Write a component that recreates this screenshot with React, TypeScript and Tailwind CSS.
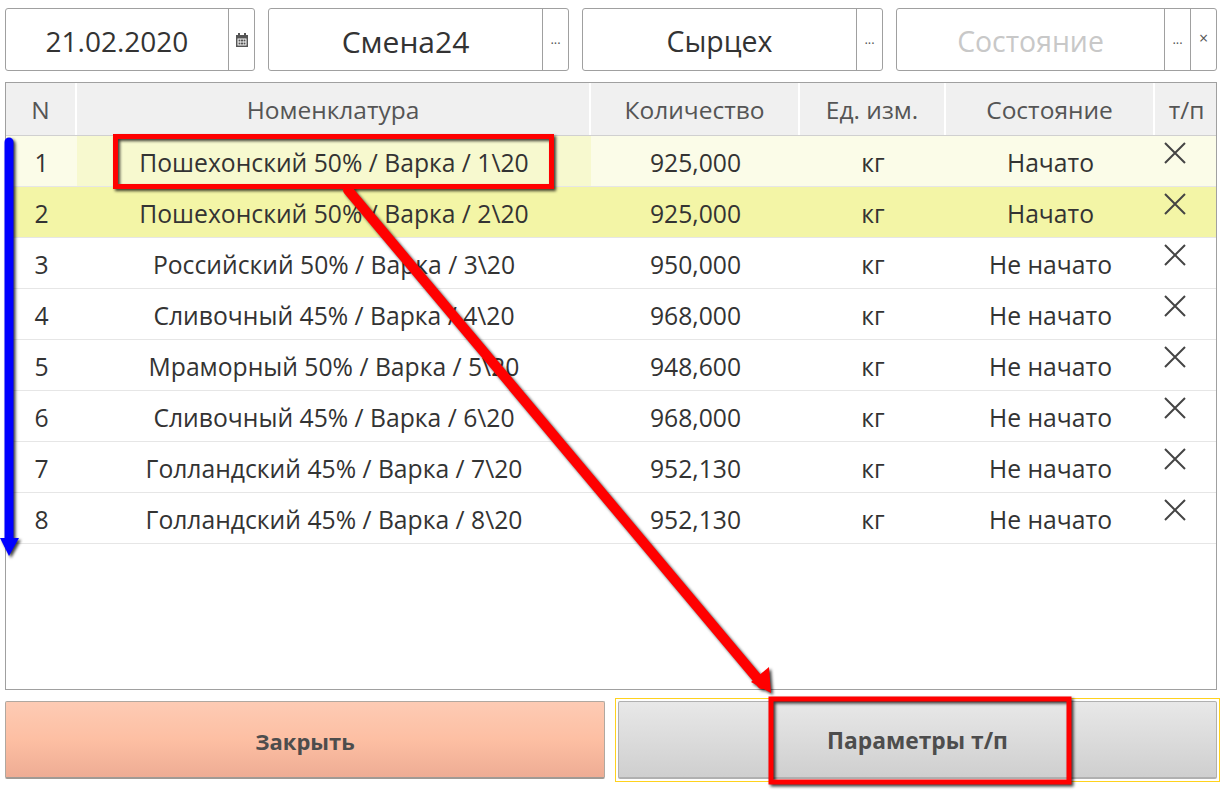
import React from 'react';

const rows = [
  ['1', 'Пошехонский 50% / Варка / 1\\20', '925,000', 'кг', 'Начато'],
  ['2', 'Пошехонский 50% / Варка / 2\\20', '925,000', 'кг', 'Начато'],
  ['3', 'Российский 50% / Варка / 3\\20', '950,000', 'кг', 'Не начато'],
  ['4', 'Сливочный 45% / Варка / 4\\20', '968,000', 'кг', 'Не начато'],
  ['5', 'Мраморный 50% / Варка / 5\\20', '948,600', 'кг', 'Не начато'],
  ['6', 'Сливочный 45% / Варка / 6\\20', '968,000', 'кг', 'Не начато'],
  ['7', 'Голландский 45% / Варка / 7\\20', '952,130', 'кг', 'Не начато'],
  ['8', 'Голландский 45% / Варка / 8\\20', '952,130', 'кг', 'Не начато'],
];

const Addon = ({ children, className = 'w-[26px]' }: { children: React.ReactNode; className?: string }) => (
  <div className={`${className} shrink-0 border-l border-[#a0a0a0] flex items-center justify-center text-[#555] text-[13px]`}>
    {children}
  </div>
);

const Field = ({ value, textClass, className, children }: { value: string; textClass: string; className: string; children: React.ReactNode }) => (
  <div className={`${className} h-[63px] shrink-0 flex border border-[#a0a0a0] rounded-[3px] bg-white`}>
    <div className={`flex-1 flex items-center justify-center pt-[3px] ${textClass}`}>{value}</div>
    {children}
  </div>
);

const Cross = () => (
  <svg width="22" height="22" viewBox="0 0 22 22" className="text-[#444]">
    <path d="M1 1 L21 21 M21 1 L1 21" stroke="currentColor" strokeWidth="2" fill="none" />
  </svg>
);

const Calendar = () => (
  <svg width="12" height="14" viewBox="0 0 12 14" fill="#555">
    <path d="M0 2h2V0h2v2h4V0h2v2h2v12H0z M1.5 5.5v7h9v-7z" fillRule="evenodd" />
    <path d="M2.5 6.5h2v2h-2z M5 6.5h2v2H5z M7.5 6.5h2v2h-2z M2.5 9.5h2v2h-2z M5 9.5h2v2H5z M7.5 9.5h2v2h-2z" />
  </svg>
);

const headCell = 'flex items-center justify-center pt-[2px] border-r-2 border-white text-[#555] text-[24.5px]';
const cols = 'grid grid-cols-[71px_514px_209px_146px_209px_63px]';

export default function App() {
  return (
    <div className="relative w-[1228px] h-[790px] bg-white overflow-hidden pt-2 pl-[5px] font-['Open_Sans','Noto_Sans',sans-serif]">
      {/* top filter row */}
      <div className="flex gap-[13px]">
        <Field value="21.02.2020" textClass="text-[28px] text-[#333]" className="w-[250px]">
          <Addon><Calendar /></Addon>
        </Field>
        <Field value="Смена24" textClass="text-[30px] text-[#333]" className="w-[301px]">
          <Addon>...</Addon>
        </Field>
        <Field value="Сырцех" textClass="text-[28.5px] text-[#333]" className="w-[301px]">
          <Addon>...</Addon>
        </Field>
        <Field value="Состояние" textClass="text-[28.4px] text-[#c8c8c8]" className="w-[321px]">
          <Addon>...</Addon>
          <Addon><span className="text-[16px] -mt-1">×</span></Addon>
        </Field>
      </div>

      {/* table */}
      <div className="mt-[11px] w-[1212px] h-[608px] border border-[#a0a0a0]">
        <div className={`${cols} h-[53px] bg-[#f0f0f0] border-b border-[#d0d0d0]`}>
          <div className={headCell}>N</div>
          <div className={headCell}>Номенклатура</div>
          <div className={headCell}>Количество</div>
          <div className={headCell}>Ед. изм.</div>
          <div className={headCell}>Состояние</div>
          <div className="flex items-center justify-center pt-[2px] text-[#555] text-[24.5px]">т/п</div>
        </div>
        {rows.map((r, i) => (
          <div
            key={r[0]}
            className={`${cols} h-[51px] border-b border-[#e6e6e6] text-[#333] text-[24.7px] ${i === 0 ? 'bg-[#fbfce8]' : i === 1 ? 'bg-[#f3f5a6]' : 'bg-white'}`}
          >
            <div className="flex items-center justify-center pt-[3px]">{r[0]}</div>
            <div className={`flex items-center justify-center pt-[3px] ${i === 0 ? 'bg-[#f7f9cf]' : ''}`}>{r[1]}</div>
            <div className="flex items-center justify-center pt-[3px]">{r[2]}</div>
            <div className="flex items-center justify-center pt-[3px]">{r[3]}</div>
            <div className="flex items-center justify-center pt-[3px]">{r[4]}</div>
            <div className="flex pl-[9px] pt-[6px]"><Cross /></div>
          </div>
        ))}
      </div>

      {/* bottom buttons */}
      <div className="mt-[11px] flex gap-[13px]">
        <button className="w-[600px] h-[78px] pt-[3px] rounded-[2px] border border-[#b0a8a0] border-b-2 border-b-[#a09a94] bg-gradient-to-b from-[#fdcbb4] via-[#fdbfa3] to-[#eeac94] text-[#4d4d4d] text-[22px] font-bold">
          Закрыть
        </button>
        <div className="relative">
          <div className="absolute -inset-[3px] border border-[#ffd21e]" />
          <button className="relative w-[599px] h-[78px] pt-[3px] rounded-[2px] border border-[#b0b0b0] border-b-2 bg-gradient-to-b from-[#e8e8e8] to-[#cfcfcf] text-[#4d4d4d] text-[22.8px] font-bold">
            Параметры т/п
          </button>
        </div>
      </div>

      {/* annotations drawn over the screenshot */}
      <svg width="1228" height="790" className="absolute inset-0 pointer-events-none drop-shadow-[2px_2px_1.5px_rgba(0,0,0,0.75)]">
        <rect x="115.5" y="136.5" width="436" height="50" fill="none" stroke="#ff0000" strokeWidth="5" />
        <rect x="771" y="699" width="298" height="83" fill="none" stroke="#ff0000" strokeWidth="5" />
        <line x1="348" y1="190" x2="762" y2="684" stroke="#ff0000" strokeWidth="10" strokeLinecap="round" />
        <polygon points="771,693 751,682 769,667" fill="#ff0000" />
        <line x1="9" y1="142" x2="9" y2="545" stroke="#0000ff" strokeWidth="9" strokeLinecap="round" />
        <polygon points="9,556 0,538 19,538" fill="#0000ff" />
      </svg>
    </div>
  );
}
